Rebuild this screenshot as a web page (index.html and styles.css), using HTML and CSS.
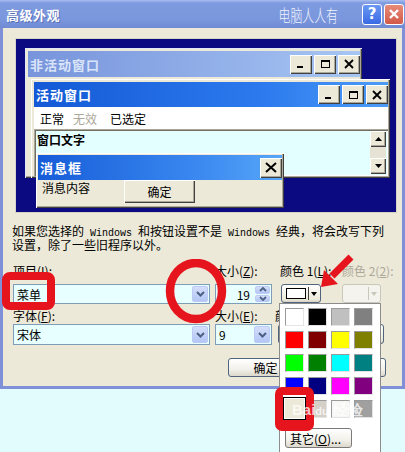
FILE: index.html
```html
<!DOCTYPE html>
<html>
<!-- Header Section -->
<head>
  <meta charset="utf-8">
  <!-- CSS Style Section -->
  <link rel="stylesheet" href="styles.css">
</head>
<!-- Dialog Section -->
<body>
  <div class="page">
    <div class="dialog">
      <div class="titlebar">
        <span class="title">高级外观</span>
        <span class="brand">电脑人人有</span>
        <span class="tbtn help">?</span>
        <span class="tbtn close">
          <svg width="12" height="12" viewBox="0 0 12 12"><path d="M2 2 L10 10 M10 2 L2 10" stroke="#fff" stroke-width="2.4"/></svg>
        </span>
      </div>

      <div class="frame">
        <!-- Preview of the window styles -->
        <div class="preview">
          <div class="win inactive">
            <div class="caption">
              <span class="cap-text">非活动窗口</span>
              <span class="cbtn"><svg width="10" height="10" viewBox="0 0 10 10"><rect x="1" y="7" width="6" height="2" fill="#000"/></svg></span>
              <span class="cbtn"><svg width="11" height="10" viewBox="0 0 11 10"><rect x="1.5" y="1.5" width="8" height="7" fill="none" stroke="#000"/><rect x="1" y="1" width="9" height="2" fill="#000"/></svg></span>
              <span class="cbtn"><svg width="10" height="10" viewBox="0 0 10 10"><path d="M1 1 L9 9 M9 1 L1 9" stroke="#000" stroke-width="1.8"/></svg></span>
            </div>
          </div>

          <div class="win active">
            <div class="caption">
              <span class="cap-text">活动窗口</span>
              <span class="cbtn"><svg width="10" height="10" viewBox="0 0 10 10"><rect x="1" y="7" width="6" height="2" fill="#000"/></svg></span>
              <span class="cbtn"><svg width="11" height="10" viewBox="0 0 11 10"><rect x="1.5" y="1.5" width="8" height="7" fill="none" stroke="#000"/><rect x="1" y="1" width="9" height="2" fill="#000"/></svg></span>
              <span class="cbtn"><svg width="10" height="10" viewBox="0 0 10 10"><path d="M1 1 L9 9 M9 1 L1 9" stroke="#000" stroke-width="1.8"/></svg></span>
            </div>
            <div class="menu">
              <span>正常</span>
              <span class="off">无效</span>
              <span class="sel">已选定</span>
            </div>
            <div class="textarea">
              <span class="wtext">窗口文字</span>
              <div class="scroll">
                <span class="sbtn"><svg width="7" height="4" viewBox="0 0 7 4"><path d="M0 4 L3.5 0 L7 4 Z" fill="#000"/></svg></span>
                <span class="track"></span>
                <span class="sbtn"><svg width="7" height="4" viewBox="0 0 7 4"><path d="M0 0 L3.5 4 L7 0 Z" fill="#000"/></svg></span>
              </div>
            </div>
          </div>

          <div class="win msgbox">
            <div class="caption">
              <span class="cap-text">消息框</span>
              <span class="cbtn wide"><svg width="12" height="11" viewBox="0 0 12 11"><path d="M1 1 L11 10 M11 1 L1 10" stroke="#000" stroke-width="2"/></svg></span>
            </div>
            <div class="msg-body">
              <span>消息内容</span>
              <span class="classic-btn">确定</span>
            </div>
          </div>
        </div>

        <p class="note"><span class="line">如果您选择的<span class="mono"> Windows </span>和按钮设置不是<span class="mono"> Windows </span>经典，将会改写下列</span><span class="line">设置，除了一些旧程序以外。</span></p>

        <!-- Item settings -->
        <div class="form">
          <label class="lbl">项目(<u>I</u>):</label>
          <label class="lbl">大小(<u>Z</u>):</label>
          <label class="lbl">颜色 1(<u>L</u>):</label>
          <label class="lbl grey">颜色 2(<u>2</u>):</label>

          <div class="combo wide-combo"><span class="val">菜单</span><span class="drop"><svg width="9" height="6" viewBox="0 0 9 6"><path d="M1 1 L4.5 4.5 L8 1" fill="none" stroke="#4d6185" stroke-width="2"/></svg></span></div>
          <div class="combo spin"><span class="val num">19</span><span class="spinbtns"><span class="half"><svg width="8" height="5" viewBox="0 0 8 5"><path d="M1 4 L4 1 L7 4" fill="none" stroke="#4d6185" stroke-width="1.8"/></svg></span><span class="half"><svg width="8" height="5" viewBox="0 0 8 5"><path d="M1 1 L4 4 L7 1" fill="none" stroke="#4d6185" stroke-width="1.8"/></svg></span></span></div>
          <div class="colorbtn"><span class="chip"></span><span class="sep"></span><span class="arrow"></span></div>
          <div class="colorbtn disabled"><span class="chip"></span><span class="sep"></span><span class="arrow"></span></div>

          <label class="lbl lower">字体(<u>F</u>):</label>
          <label class="lbl lower">大小(<u>E</u>):</label>
          <label class="lbl lower shift">颜色(<u>R</u>):</label>
          <span></span>

          <div class="combo wide-combo tall"><span class="val">宋体</span><span class="drop"><svg width="9" height="6" viewBox="0 0 9 6"><path d="M1 1 L4.5 4.5 L8 1" fill="none" stroke="#4d6185" stroke-width="2"/></svg></span></div>
          <div class="combo tall"><span class="val small">9</span><span class="drop"><svg width="9" height="6" viewBox="0 0 9 6"><path d="M1 1 L4.5 4.5 L8 1" fill="none" stroke="#4d6185" stroke-width="2"/></svg></span></div>
          <div class="colorbtn long"></div>
        </div>

        <div class="actions">
          <span class="xp-btn">确定</span>
          <span class="xp-btn">取消</span>
        </div>
      </div>
    </div>

    <!-- Colour drop-down -->
    <div class="popup">
      <div class="swatches">
        <span class="sw c-white"></span><span class="sw c-black"></span><span class="sw c-silver"></span><span class="sw c-grey"></span>
        <span class="sw c-red"></span><span class="sw c-maroon"></span><span class="sw c-yellow"></span><span class="sw c-olive"></span>
        <span class="sw c-lime"></span><span class="sw c-green"></span><span class="sw c-cyan"></span><span class="sw c-teal"></span>
        <span class="sw c-blue"></span><span class="sw c-navy"></span><span class="sw c-fuchsia"></span><span class="sw c-purple"></span>
        <span class="sw picked"></span><span class="sw c-light"></span><span class="sw c-paper"></span><span class="sw c-mid"></span>
      </div>
      <span class="xp-btn other">其它(<u>O</u>)...</span>
      <span class="pick-mark"></span>
      <span class="watermark">Bai<small>du</small> 经验</span>
    </div>

    <!-- Red annotations -->
    <div class="mark-box"></div>
    <svg class="mark-circle" width="62" height="66" viewBox="0 0 62 66"><ellipse cx="31" cy="32" rx="26" ry="28" fill="none" stroke="#e6141c" stroke-width="8.5"/></svg>
    <svg class="mark-arrow" width="45" height="45" viewBox="0 0 45 45"><path d="M36 7 L17 26" stroke="#e6141c" stroke-width="7"/><path d="M6 37 L23 34 L9 20 Z" fill="#e6141c"/></svg>
  </div>
</body>
</html>
```

FILE: styles.css
```css
/* Main Element Styles */
body {
  margin: 0;
  background-color: #e2fcfe;
  font-family: "Noto Sans CJK SC", sans-serif;
  font-size: 12px;
  color: #000;
}
.page {
  position: relative;
  width: 405px;
  height: 452px;
  overflow: hidden;
}
u {
  text-decoration: underline;
}

/* Dialog Styles */
.dialog {
  width: 405px;
  height: 389px;
  background-color: #ece9d8;
}
.titlebar {
  height: 28px;
  display: flex;
  align-items: center;
  padding: 0 1px 0 6px;
  box-sizing: border-box;
  background: linear-gradient(to bottom, #a7bdf0 0, #7f9be0 3px, #7a96dc 70%, #6f8ad3 100%);
}
.title {
  color: #fff;
  font-size: 13px;
  font-weight: bold;
  letter-spacing: 0.5px;
  text-shadow: 1px 1px #5a70b8;
}
.brand {
  margin-left: auto;
  margin-right: 24px;
  color: #eef3fd;
  font-size: 17px;
  font-weight: 300;
  transform: scaleX(0.7);
  transform-origin: right center;
}
.tbtn {
  width: 20px;
  height: 21px;
  box-sizing: border-box;
  border: 1px solid #fff;
  border-radius: 3px;
  display: flex;
  align-items: center;
  justify-content: center;
  color: #fff;
  font-family: "DejaVu Sans", sans-serif;
  font-weight: bold;
  font-size: 15px;
}
.help {
  background: linear-gradient(to bottom, #6a98f4, #3a6ae4);
  margin-right: 2px;
}
.close {
  background: linear-gradient(to bottom, #e88a78, #d25a48);
}
.frame {
  height: 361px;
  box-sizing: border-box;
  border: 3px solid #7f8fd8;
  border-top: 0;
  padding: 10px 5px 0 10px;
}

/* Preview Styles */
.preview {
  position: relative;
  width: 382px;
  height: 175px;
  margin-left: 2px;
  box-sizing: border-box;
  background-color: #0b0a80;
  border: 1px solid #d6d3c8;
}
.win {
  position: absolute;
  display: flex;
  flex-direction: column;
  box-sizing: border-box;
  padding: 3px 2px 2px 3px;
  background-color: #ece9d8;
  box-shadow: inset 1px 1px #fff, inset -1px -1px #404040, inset -2px -2px #aca899;
}
.inactive {
  left: 9px;
  top: 9px;
  width: 337px;
  height: 130px;
  box-shadow: inset 1px 1px #dfe6f6, inset -1px -1px #404040, inset -2px -2px #aca899;
}
.active {
  left: 15px;
  top: 40px;
  width: 359px;
  height: 99px;
}
.msgbox {
  left: 20px;
  top: 114px;
  width: 248px;
  height: 55px;
  padding: 2px 2px 2px 2px;
}
.caption {
  display: flex;
  align-items: center;
  gap: 2px;
  height: 25px;
  background: linear-gradient(to right, #1459d6, #2c7aee 65%, #4c9cf6);
}
.inactive .caption {
  height: 26px;
  background: linear-gradient(to right, #7894dc, #98b6ec 70%, #a8c6f2);
}
.msgbox .caption {
  background: linear-gradient(to right, #165cd8, #3a88f0 65%, #56a6f8);
}
.cap-text {
  margin-right: auto;
  padding-left: 2px;
  color: #fff;
  font-size: 13px;
  font-weight: bold;
  letter-spacing: 1px;
}
.inactive .cap-text {
  color: #d9e4f8;
}
.cbtn {
  width: 22px;
  height: 19px;
  box-sizing: border-box;
  display: flex;
  align-items: center;
  justify-content: center;
  background-color: #ece9d8;
  box-shadow: inset 1px 1px #fff, inset -1px -1px #404040, inset -2px -2px #aca899;
}
.cbtn.wide {
  height: 20px;
}
.menu {
  height: 22px;
  display: flex;
  align-items: center;
  padding-left: 6px;
  background-color: #fff;
}
.menu .off {
  margin-left: 9px;
  color: #aca899;
}
.menu .sel {
  margin-left: 13px;
}
.textarea {
  flex: 1;
  display: flex;
  justify-content: space-between;
  padding: 2px;
  background-color: #e4ffff;
  box-shadow: inset 1px 1px #aca899, inset 2px 2px #716f64, inset -1px -1px #fff;
}
.wtext {
  padding: 1px 0 0 1px;
  font-weight: bold;
  line-height: 15px;
}
.scroll {
  width: 16px;
  display: flex;
  flex-direction: column;
  background-color: #e6e3d4;
}
.sbtn {
  height: 16px;
  display: flex;
  align-items: center;
  justify-content: center;
  background-color: #ece9d8;
  box-shadow: inset 1px 1px #fff, inset -1px -1px #404040, inset -2px -2px #aca899;
}
.track {
  flex: 1;
}
.msg-body {
  flex: 1;
  display: flex;
  align-items: flex-start;
  padding-left: 4px;
  line-height: 15px;
}
.classic-btn {
  margin-left: 34px;
  width: 71px;
  height: 23px;
  display: flex;
  align-items: center;
  justify-content: center;
  background-color: #ece9d8;
  box-shadow: inset 1px 1px #fff, inset -1px -1px #404040, inset -2px -2px #aca899;
}

/* Form Styles */
.note {
  margin: 12px 0 0 -1px;
  font-family: "Liberation Sans", "Noto Sans CJK SC", sans-serif;
  white-space: nowrap;
}
.note .line {
  display: block;
  height: 14px;
  line-height: 14px;
}
.mono {
  font-family: "Liberation Mono", monospace;
  font-size: 10px;
}
.form {
  display: grid;
  grid-template-columns: 202px 65px 62px 1fr;
  grid-template-rows: 22px 20px 20px 21px;
  margin-top: 9px;
}
.lbl {
  align-self: end;
  margin-bottom: 6px;
  line-height: 14px;
  white-space: nowrap;
}
.lbl.lower {
  margin-bottom: 1px;
}
.lbl.shift {
  margin-left: -5px;
}
.grey {
  color: #aca899;
}
.combo {
  width: 57px;
  display: flex;
  box-sizing: border-box;
  border: 1px solid #7f9db9;
  background-color: #e8ffff;
  padding: 1px;
}
.wide-combo {
  width: 197px;
}
.combo.tall {
  height: 21px;
}
.val {
  flex: 1;
  padding-left: 2px;
  line-height: 17px;
}
.val.num {
  text-align: right;
  padding-right: 5px;
}
.drop {
  width: 16px;
  display: flex;
  align-items: center;
  justify-content: center;
  box-sizing: border-box;
  border: 1px solid #bccbf4;
  border-radius: 2px;
  background: linear-gradient(to bottom, #d4def9, #b4c6f5);
}
.spinbtns {
  width: 15px;
  display: flex;
  flex-direction: column;
  gap: 1px;
}
.half {
  flex: 1;
  display: flex;
  align-items: center;
  justify-content: center;
  border: 1px solid #bccbf4;
  border-radius: 2px;
  background: linear-gradient(to bottom, #d4def9, #b4c6f5);
}
.colorbtn {
  width: 40px;
  height: 19px;
  margin-left: 1px;
  box-sizing: border-box;
  display: flex;
  align-items: center;
  padding: 0 3px 0 4px;
  border: 1px solid #50647c;
  border-radius: 3px;
  background: linear-gradient(to bottom, #fff, #ece9d8 85%, #d6d0c5);
}
.colorbtn .chip {
  width: 23px;
  height: 11px;
  box-sizing: border-box;
  border: 1px solid #000;
  background-color: #fff;
}
.colorbtn .sep {
  width: 1px;
  height: 13px;
  margin: 0 2px 0 2px;
  background-color: #404040;
}
.colorbtn .arrow {
  width: 0;
  height: 0;
  border-left: 3px solid transparent;
  border-right: 3px solid transparent;
  border-top: 4px solid #000;
}
.colorbtn.disabled {
  margin-left: 0;
  width: 39px;
  border-color: #c9c7ba;
  background: #f4f3ee;
}
.colorbtn.disabled .chip {
  border-color: transparent;
  background: transparent;
}
.colorbtn.disabled .sep {
  background-color: #c9c7ba;
}
.colorbtn.disabled .arrow {
  border-top-color: #c9c7ba;
}
.colorbtn.long {
  width: 106px;
  height: 20px;
  margin-left: -2px;
  grid-column: 3 / 5;
}
.actions {
  display: flex;
  justify-content: flex-end;
  gap: 8px;
  margin: 13px 11px 0 0;
}
.xp-btn {
  width: 75px;
  height: 19px;
  box-sizing: border-box;
  display: flex;
  align-items: center;
  justify-content: center;
  border: 1px solid #50647c;
  border-radius: 3px;
  background: linear-gradient(to bottom, #fff, #f2f1ea 60%, #dcd8cc);
}

/* Popup Styles */
.popup {
  position: absolute;
  left: 279px;
  top: 303px;
  width: 102px;
  height: 160px;
  box-sizing: border-box;
  padding: 4px 0 0 5px;
  border: 1px solid #8c8c8c;
  background-color: #fff;
  z-index: 3;
}
.swatches {
  display: grid;
  grid-template-columns: repeat(4, 19px);
  grid-auto-rows: 18px;
  column-gap: 4px;
  row-gap: 5px;
}
.sw {
  box-sizing: border-box;
  border: 1px solid;
  border-color: #9a9a9a #e4e4e4 #e4e4e4 #9a9a9a;
}
.c-white { background-color: #fff; }
.c-black { background-color: #000; }
.c-silver { background-color: #c0c0c0; }
.c-grey { background-color: #808080; }
.c-red { background-color: #ff0000; }
.c-maroon { background-color: #800000; }
.c-yellow { background-color: #ffff00; }
.c-olive { background-color: #808000; }
.c-lime { background-color: #00ff00; }
.c-green { background-color: #008000; }
.c-cyan { background-color: #00ffff; }
.c-teal { background-color: #008080; }
.c-blue { background-color: #0000ff; }
.c-navy { background-color: #000080; }
.c-fuchsia { background-color: #ff00ff; }
.c-purple { background-color: #800080; }
.c-light { background-color: #d4d0c8; }
.c-paper { background-color: #f6f6f4; }
.c-mid { background-color: #a0a0a0; }
.sw.picked {
  position: relative;
  z-index: 2;
  margin: -3px -2px -2px -2px;
  border: 1px solid #000;
  background-color: #ece9d8;
  box-shadow: inset 0 0 0 1px #fff, 0 -2px 0 0 #fff;
}
.pick-mark {
  position: absolute;
  left: -5px;
  top: 83px;
  width: 39px;
  height: 44px;
  border-radius: 7px;
  background-color: #e6141c;
  z-index: 1;
}
.xp-btn.other {
  width: 67px;
  height: 20px;
  margin-top: 10px;
  justify-content: flex-start;
  padding-left: 4px;
  border-color: #7a7a7a;
}
.watermark {
  position: absolute;
  left: 12px;
  top: 97px;
  z-index: 3;
  color: rgba(255, 255, 255, 0.75);
  font-family: "Liberation Sans", sans-serif;
  font-weight: bold;
  font-size: 15px;
}
.watermark small {
  font-size: 11px;
}

/* Annotation Styles */
.mark-box {
  position: absolute;
  left: 2px;
  top: 272px;
  width: 53px;
  height: 38px;
  box-sizing: border-box;
  border: 8px solid #e6141c;
  border-radius: 8px;
  z-index: 4;
}
.mark-circle {
  position: absolute;
  left: 165px;
  top: 259px;
  z-index: 4;
}
.mark-arrow {
  position: absolute;
  left: 315px;
  top: 250px;
  z-index: 4;
}
```
